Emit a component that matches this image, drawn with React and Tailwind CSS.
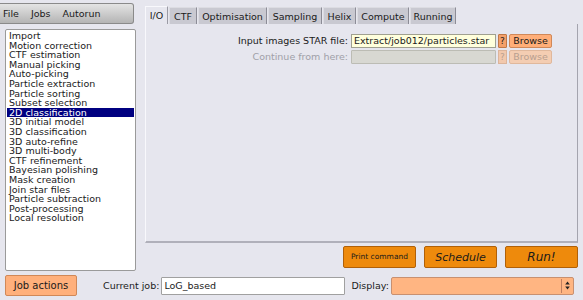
import React from "react";

const items = [
  "Import",
  "Motion correction",
  "CTF estimation",
  "Manual picking",
  "Auto-picking",
  "Particle extraction",
  "Particle sorting",
  "Subset selection",
  "2D classification",
  "3D initial model",
  "3D classification",
  "3D auto-refine",
  "3D multi-body",
  "CTF refinement",
  "Bayesian polishing",
  "Mask creation",
  "Join star files",
  "Particle subtraction",
  "Post-processing",
  "Local resolution",
];

const tabs = [
  ["I/O", "w-[23px]"],
  ["CTF", "w-[28px]"],
  ["Optimisation", "w-[69px]"],
  ["Sampling", "w-[54px]"],
  ["Helix", "w-[33px]"],
  ["Compute", "w-[52px]"],
  ["Running", "w-[46px]"],
];

export default function App() {
  return (
    <div
      className="w-[583px] h-[300px] bg-[#e6e6ee] text-[9.5px] text-[#1a1a1a] overflow-hidden"
      style={{ fontFamily: '"DejaVu Sans", sans-serif' }}
    >
      <div className="flex h-[271px]">
        {/* left column */}
        <div className="w-[136px] pt-[3px] flex flex-col">
          <div className="h-[21px] w-[134px] rounded-r-[3px] border border-l-0 border-[#8a8a8a] bg-gradient-to-b from-[#e4e4e4] to-[#b4b4b4] flex items-center leading-none">
            <span className="ml-[3px]">File</span>
            <span className="ml-[12px]">Jobs</span>
            <span className="ml-[12px]">Autorun</span>
          </div>
          <div className="mt-[5px] ml-[5px] h-[242px] bg-white border border-[#9a9a9a] rounded-[2px] pt-[1px] px-[1px]">
            {items.map((it) => (
              <div
                key={it}
                className={
                  "h-[9.6px] leading-[9.6px] pl-[2px] whitespace-nowrap " +
                  (it === "2D classification" ? "bg-[#000080] text-white" : "")
                }
              >
                {it}
              </div>
            ))}
          </div>
        </div>

        {/* right column */}
        <div className="ml-[9px] pt-[6px] w-[433px] flex flex-col">
          <div className="flex gap-[1px] h-[18px]">
            {tabs.map(([t, w], i) => (
              <div
                key={t}
                className={
                  w +
                  " h-[18px] flex items-center justify-center leading-none border-t border-l border-r " +
                  (i === 0
                    ? "bg-[#e6e6ee] border-t-[#f8f8fc] border-l-[#f8f8fc] border-r-[#9a9aa4]"
                    : "bg-[#c9c9d1] border-t-[#dcdce2] border-l-[#dcdce2] border-r-[#8c8c96] mt-[1px] h-[17px]")
                }
              >
                {t}
              </div>
            ))}
          </div>
          <div className="h-[219px] bg-[#e6e6ee] border-l border-l-[#f8f8fc] border-r border-r-[#a4a4ae] border-b-2 border-b-[#b0b0ba] pt-[10px]">
            <div className="flex items-center h-[14px]">
              <span className="w-[202px] text-right">Input images STAR file:</span>
              <div className="ml-[3px] w-[145px] h-[14px] bg-[#ffffdc] border border-[#a0a090] flex items-center pl-[2px] leading-none">
                Extract/job012/particles.star
              </div>
              <div className="ml-[2px] w-[9px] h-[14px] bg-[#f4a06a] border border-[#c07848] flex items-center justify-center leading-none text-[9px] rounded-[1px]">
                ?
              </div>
              <div className="ml-[2px] w-[43px] h-[14px] bg-[#ffae78] border border-[#d08858] rounded-[2px] flex items-center justify-center leading-none">
                Browse
              </div>
            </div>
            <div className="flex items-center h-[14px] mt-[2px]">
              <span className="w-[202px] text-right text-[#a0a0a8]">Continue from here:</span>
              <div className="ml-[3px] w-[145px] h-[14px] bg-[#d8d8d2] border border-[#bcbcb4] rounded-[1px]" />
              <div className="ml-[2px] w-[9px] h-[14px] bg-[#f2c8ac] border border-[#dcb49a] flex items-center justify-center leading-none text-[9px] text-[#b8a090]">
                ?
              </div>
              <div className="ml-[2px] w-[43px] h-[14px] bg-[#f4cdb2] border border-[#e0b89c] rounded-[2px] flex items-center justify-center leading-none text-[#b8a090]">
                Browse
              </div>
            </div>
          </div>
          <div className="flex justify-end gap-[8px] mt-[3px]">
            <div className="w-[73px] h-[22px] bg-[#ee8a0c] border border-[#b06008] rounded-[2px] flex items-center justify-center text-[7.5px] leading-none">
              Print command
            </div>
            <div className="w-[73px] h-[22px] bg-[#ee8a0c] border border-[#b06008] rounded-[2px] flex items-center justify-center text-[11px] italic leading-none">
              Schedule
            </div>
            <div className="w-[73px] h-[22px] bg-[#ee8a0c] border border-[#b06008] rounded-[2px] flex items-center justify-center text-[12px] italic leading-none">
              Run!
            </div>
          </div>
        </div>
      </div>

      {/* bottom row */}
      <div className="flex items-center h-[29px]">
        <div className="ml-[5px] w-[72px] h-[21px] bg-[#ffb07c] border border-[#d08858] rounded-[2px] flex items-center justify-center leading-none text-[10px]">
          Job actions
        </div>
        <span className="ml-[26px] leading-none">Current job:</span>
        <div className="ml-[2px] w-[184px] h-[18px] bg-white border border-[#a0a0a0] rounded-[1px] flex items-center pl-[2px] leading-none">
          LoG_based
        </div>
        <span className="ml-[6px] leading-none">Display:</span>
        <div className="ml-[2px] w-[183px] h-[18px] bg-[#ffb582] border border-[#c89070] rounded-[2px] flex items-center justify-end">
          <div className="h-[14px] border-l border-[#c08060] w-[12px] flex items-center justify-center">
            <svg width="5" height="9" viewBox="0 0 5 9">
              <path d="M2.5 0.5 L4.8 3.5 L0.2 3.5 Z" fill="#222" />
              <path d="M2.5 8.5 L4.8 5.5 L0.2 5.5 Z" fill="#222" />
            </svg>
          </div>
        </div>
      </div>
    </div>
  );
}
